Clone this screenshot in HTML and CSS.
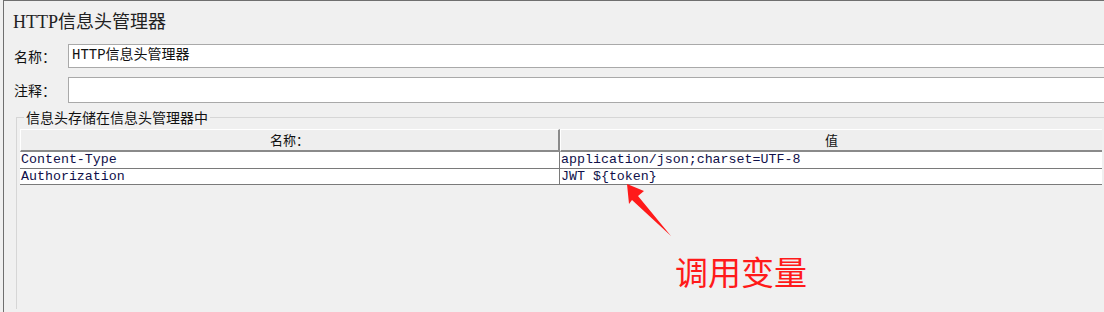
FILE: index.html
```html
<!DOCTYPE html>
<html lang="zh">
<head>
<meta charset="utf-8">
<link rel="stylesheet" href="styles.css">
</head>
<body>
<div class="frame">
  <h1 class="title">HTTP信息头管理器</h1>
  <div class="field">
    <label class="label">名称：</label>
    <div class="input">HTTP信息头管理器</div>
  </div>
  <div class="field field-2">
    <label class="label">注释：</label>
    <div class="input"></div>
  </div>
  <fieldset class="group">
    <legend class="legend">信息头存储在信息头管理器中</legend>
    <div class="table">
      <div class="th th-first">名称：</div>
      <div class="th">值</div>
      <div class="td td-first">Content-Type</div>
      <div class="td">application/json;charset=UTF-8</div>
      <div class="td td-first">Authorization</div>
      <div class="td">JWT ${token}</div>
    </div>
  </fieldset>
</div>
<svg class="arrow" width="60" height="60" viewBox="620 180 60 60" xmlns="http://www.w3.org/2000/svg">
  <polygon points="627,184 644,191 638,196 671,236 632,200 629,204" fill="#ff1a1a"/>
</svg>
<div class="note">调用变量</div>
</body>
</html>
```
FILE: styles.css
```css
html, body {
  margin: 0;
  padding: 0;
  width: 1104px;
  height: 312px;
  overflow: hidden;
  background: #f0f0f0;
}
body {
  position: relative;
  font-family: "Noto Sans CJK SC", sans-serif;
}
.frame {
  margin-left: 3px;
  height: 312px;
  border-top: 1px solid #6f6f6f;
  border-left: 1px solid #6f6f6f;
  box-sizing: border-box;
}
.title {
  margin: 0;
  padding: 10px 0 0 9px;
  height: 30px;
  box-sizing: border-box;
  font-family: "Liberation Serif", "Noto Sans CJK SC", serif;
  font-weight: normal;
  font-size: 18px;
  line-height: 22px;
  color: #222;
}
.field {
  display: flex;
  align-items: center;
  margin-top: 13px;
  margin-right: -10px;
  height: 24px;
}
.field-2 {
  margin-top: 9px;
  height: 26px;
}
.label {
  width: 64px;
  padding-left: 10px;
  box-sizing: border-box;
  font-size: 14px;
  line-height: 20px;
  color: #111;
  flex: none;
}
.input {
  flex: 1;
  height: 100%;
  box-sizing: border-box;
  border: 1px solid #a9a9a9;
  background: #fff;
  padding-left: 3px;
  font-size: 14px;
  line-height: 21px;
  color: #111;
  font-family: "Liberation Mono", "Noto Sans CJK SC", monospace;
}
.group {
  margin: 6px -20px 0 12px;
  padding: 4px 0 0 3px;
  border: none;
  border-top: 1px solid #d6d6d6;
  border-left: 1px solid #d6d6d6;
  height: 200px;
  box-sizing: border-box;
  min-width: 0;
}
.legend {
  margin-left: 4px;
  padding: 0 2px 0 2px;
  font-size: 14px;
  line-height: 16px;
  color: #111;
}
.table {
  width: 1082px;
  display: grid;
  grid-template-columns: 540px 542px;
  box-sizing: border-box;
  border-right: 1px solid #7a7a7a;
  border-bottom: 1px solid #7a7a7a;
  margin-top: 0;
}
.th {
  height: 23px;
  box-sizing: border-box;
  background: #eeeeee;
  border-top: 1px solid #ffffff;
  border-left: 1px solid #ffffff;
  border-bottom: 2px solid #8a8a8a;
  text-align: center;
  font-size: 13px;
  line-height: 20px;
  color: #111;
}
.th-first {
  border-right: 2px solid #8a8a8a;
}
.td {
  height: 16px;
  box-sizing: border-box;
  background: #fff;
  border-top: 1px solid #7a7a7a;
  padding-left: 1px;
  font-family: "Liberation Mono", monospace;
  font-size: 13.3px;
  line-height: 15px;
  color: #10104a;
  white-space: nowrap;
}
.table .td:nth-child(3), .table .td:nth-child(4) {
  border-top: none;
}
.td-first {
  border-right: 1px solid #7a7a7a;
}
.arrow {
  position: absolute;
  left: 620px;
  top: 180px;
}
.note {
  position: absolute;
  left: 675px;
  top: 248px;
  font-size: 33px;
  line-height: 46px;
  color: #ff1a1a;
}
```
